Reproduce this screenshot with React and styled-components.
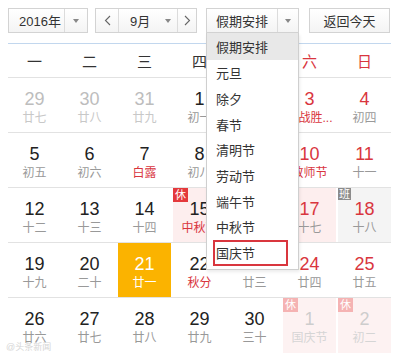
import React from 'react';
import styled, { createGlobalStyle, css } from 'styled-components';

const GlobalStyle = createGlobalStyle`
  body {
    margin: 0;
    background: #fff;
    font-family: "Liberation Sans", "Noto Sans CJK SC", sans-serif;
  }
`;

const Page = styled.div`
  position: relative;
  width: 400px;
  height: 359px;
  overflow: hidden;
  padding: 8px 0 0 8px;
  box-sizing: border-box;
`;

const Toolbar = styled.div`
  display: flex;
  align-items: center;
  height: 25px;
`;

const SelectBox = styled.div`
  position: relative;
  display: flex;
  height: 25px;
  box-sizing: border-box;
  border: 1px solid #d3d3d3;
  background: linear-gradient(#ffffff, #f4f4f4);
  margin-right: ${p => p.$gap || 0}px;
  font-size: 13px;
  color: #333;
`;

const Part = styled.div`
  display: flex;
  align-items: center;
  justify-content: ${p => p.$center ? 'center' : 'flex-start'};
  width: ${p => p.$w}px;
  padding-left: ${p => p.$pad || 0}px;
  box-sizing: border-box;
  ${p => p.$divider && css`border-left: 1px solid #dcdcdc;`}
`;

const Caret = styled.span`
  width: 0;
  height: 0;
  border-left: 3.5px solid transparent;
  border-right: 3.5px solid transparent;
  border-top: 4px solid #888;
`;

const TodayButton = styled.div`
  width: 81px;
  height: 25px;
  box-sizing: border-box;
  border: 1px solid #d3d3d3;
  background: linear-gradient(#ffffff, #f4f4f4);
  display: flex;
  align-items: center;
  justify-content: center;
  font-size: 13px;
  color: #333;
`;

const Menu = styled.div`
  position: absolute;
  z-index: 5;
  top: 24px;
  left: -1px;
  width: 93px;
  height: 237px;
  box-sizing: border-box;
  background: #fff;
  border: 1px solid #cfcfcf;
  border-top: none;
  box-shadow: 1px 2px 3px rgba(0, 0, 0, 0.08);
`;

const MenuItem = styled.div`
  height: ${p => p.$first ? 27 : 25.7}px;
  display: flex;
  align-items: center;
  padding-left: 9px;
  font-size: 13px;
  color: #333;
  background: ${p => p.$active ? '#e8e8e8' : 'transparent'};
  ${p => p.$marked && css`
    margin: 0 10px 0 6px;
    padding-left: 1px;
    height: 22px;
    border: 2px solid #d9363e;
  `}
`;

const Board = styled.div`
  width: 383px;
  margin-top: 10px;
  border-top: 1px solid #c2d7ee;
`;

const WeekHead = styled.div`
  display: grid;
  grid-template-columns: repeat(7, 53px);
  column-gap: 2px;
  height: 34px;
  box-sizing: border-box;
  border-bottom: 1px solid #e2e2e2;
`;

const WeekName = styled.div`
  display: flex;
  align-items: center;
  justify-content: center;
  font-size: 15px;
  color: ${p => p.$weekend ? '#d9363e' : '#333'};
`;

const WeekRow = styled.div`
  display: grid;
  grid-template-columns: repeat(7, 53px);
  column-gap: 2px;
  height: 55px;
  box-sizing: border-box;
  border-bottom: ${p => p.$last ? 'none' : '1px solid #e2e2e2'};
`;

const Cell = styled.div`
  position: relative;
  display: flex;
  flex-direction: column;
  align-items: center;
  padding-top: 11px;
  box-sizing: border-box;
  background: ${p => p.$today ? '#fbb300' : p.$rest ? '#fdeeee' : p.$work ? '#f4f4f4' : 'transparent'};
  opacity: ${p => p.$other && p.$rest ? 0.75 : 1};
`;

const DayNum = styled.div`
  font-size: 18px;
  line-height: 20px;
  color: ${p => p.$today ? '#fff' : p.$other ? '#bdbdbd' : p.$weekend ? '#d9363e' : '#222'};
`;

const Lunar = styled.div`
  margin-top: 2px;
  font-size: 12px;
  line-height: 14px;
  white-space: nowrap;
  color: ${p => p.$today ? '#fff' : p.$other ? '#c8c8c8' : p.$festival ? '#d9363e' : '#999'};
`;

const Badge = styled.span`
  position: absolute;
  top: 0;
  left: 0;
  width: ${p => p.$work ? 13 : 15}px;
  height: ${p => p.$work ? 12 : 14}px;
  display: flex;
  align-items: center;
  justify-content: center;
  font-size: 11px;
  line-height: 1;
  color: #fff;
  background: ${p => p.$work ? '#8c8c8c' : p.$faded ? '#f29a9a' : '#e4393c'};
`;

const Watermark = styled.div`
  position: absolute;
  left: 6px;
  bottom: 6px;
  font-size: 9px;
  color: #d6d6d6;
`;

const Chevron = ({ dir }) => (
  <svg width="7" height="11" viewBox="0 0 7 11">
    <polyline
      points={dir === 'left' ? '6,1 1.5,5.5 6,10' : '1,1 5.5,5.5 1,10'}
      fill="none"
      stroke="#666"
      strokeWidth="1.1"
    />
  </svg>
);

const weekNames = ['一', '二', '三', '四', '五', '六', '日'];

const holidays = ['假期安排', '元旦', '除夕', '春节', '清明节', '劳动节', '端午节', '中秋节', '国庆节'];

// [day, lunar, flags]
const weeks = [
  [[29, '廿七', 'o'], [30, '廿八', 'o'], [31, '廿九', 'o'], [1, '初一'], [2, '初二'], [3, '抗战胜...', 'f'], [4, '初四']],
  [[5, '初五'], [6, '初六'], [7, '白露', 'f'], [8, '初八'], [9, '初九'], [10, '教师节', 'f'], [11, '十一']],
  [[12, '十二'], [13, '十三'], [14, '十四'], [15, '中秋节', 'fr'], [16, '十六', 'r'], [17, '十七', 'r'], [18, '十八', 'w']],
  [[19, '十九'], [20, '二十'], [21, '廿一', 't'], [22, '秋分', 'f'], [23, '廿三'], [24, '廿四'], [25, '廿五']],
  [[26, '廿六'], [27, '廿七'], [28, '廿八'], [29, '廿九'], [30, '三十'], [1, '国庆节', 'or'], [2, '初二', 'or']],
];

export default function App() {
  return (
    <Page>
      <GlobalStyle />
      <Toolbar>
        <SelectBox $gap={7}>
          <Part $w={55} $pad={10}>2016年</Part>
          <Part $w={23} $divider $center><Caret /></Part>
        </SelectBox>
        <SelectBox $gap={9}>
          <Part $w={22} $center><Chevron dir="left" /></Part>
          <Part $w={59} $divider $pad={11}>
            <span>9月</span>
            <span style={{ marginLeft: 15, display: 'flex' }}><Caret /></span>
          </Part>
          <Part $w={19} $divider $center><Chevron dir="right" /></Part>
        </SelectBox>
        <SelectBox $gap={10}>
          <Part $w={70} $pad={9}>假期安排</Part>
          <Part $w={21} $divider $center><Caret /></Part>
          <Menu>
            {holidays.map((h, i) => (
              <MenuItem key={h} $first={i === 0} $active={i === 0} $marked={i === holidays.length - 1}>
                {h}
              </MenuItem>
            ))}
          </Menu>
        </SelectBox>
        <TodayButton>返回今天</TodayButton>
      </Toolbar>

      <Board>
        <WeekHead>
          {weekNames.map((w, i) => (
            <WeekName key={w} $weekend={i > 4}>{w}</WeekName>
          ))}
        </WeekHead>
        {weeks.map((week, wi) => (
          <WeekRow key={wi} $last={wi === weeks.length - 1}>
            {week.map(([day, lunar, flags = ''], di) => {
              const other = flags.includes('o');
              const rest = flags.includes('r');
              const work = flags.includes('w');
              const today = flags.includes('t');
              return (
                <Cell key={di} $rest={rest} $work={work} $today={today} $other={other}>
                  {rest && <Badge $faded={other}>休</Badge>}
                  {work && <Badge $work>班</Badge>}
                  <DayNum $today={today} $other={other} $weekend={di > 4}>{day}</DayNum>
                  <Lunar $today={today} $other={other} $festival={flags.includes('f')}>{lunar}</Lunar>
                </Cell>
              );
            })}
          </WeekRow>
        ))}
      </Board>
      <Watermark>@头条新闻</Watermark>
    </Page>
  );
}
